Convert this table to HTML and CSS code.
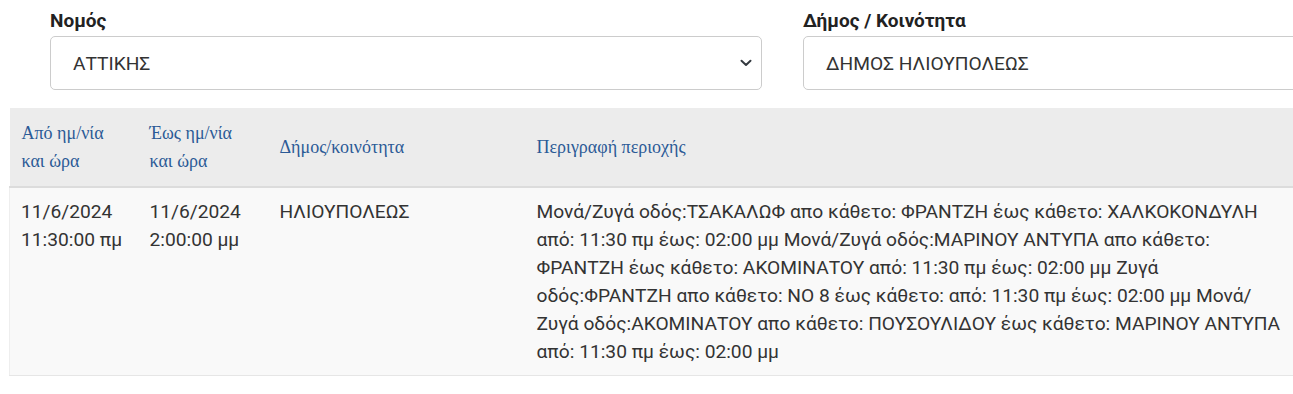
FILE: index.html
```html
<!DOCTYPE html>
<html lang="el">
<head>
<meta charset="utf-8">
<link rel="stylesheet" href="styles.css">
</head>
<body>
<div class="filters">
  <div class="field">
    <label class="label">Νομός</label>
    <div class="select">
      <span>ΑΤΤΙΚΗΣ</span>
      <svg class="chev" width="12" height="8" viewBox="0 0 12 8"><path d="M1.5 1.8 L6 6 L10.5 1.8" fill="none" stroke="#343a40" stroke-width="2" stroke-linecap="round" stroke-linejoin="round"/></svg>
    </div>
  </div>
  <div class="field">
    <label class="label">Δήμος / Κοινότητα</label>
    <div class="select">
      <span>ΔΗΜΟΣ ΗΛΙΟΥΠΟΛΕΩΣ</span>
    </div>
  </div>
</div>
<table class="grid">
  <thead>
    <tr>
      <th class="c1">Από ημ/νία<br>και ώρα</th>
      <th class="c2">Έως ημ/νία<br>και ώρα</th>
      <th class="c3">Δήμος/κοινότητα</th>
      <th class="c4">Περιγραφή περιοχής</th>
    </tr>
  </thead>
  <tbody>
    <tr>
      <td>11/6/2024<br>11:30:00 πμ</td>
      <td>11/6/2024<br>2:00:00 μμ</td>
      <td>ΗΛΙΟΥΠΟΛΕΩΣ</td>
      <td class="desc">Μονά/Ζυγά οδός:ΤΣΑΚΑΛΩΦ απο κάθετο: ΦΡΑΝΤΖΗ έως κάθετο: ΧΑΛΚΟΚΟΝΔΥΛΗ από: 11:30 πμ έως: 02:00 μμ Μονά/Ζυγά οδός:ΜΑΡΙΝΟΥ ΑΝΤΥΠΑ απο κάθετο: ΦΡΑΝΤΖΗ έως κάθετο: ΑΚΟΜΙΝΑΤΟΥ από: 11:30 πμ έως: 02:00 μμ Ζυγά οδός:ΦΡΑΝΤΖΗ απο κάθετο: ΝΟ 8 έως κάθετο: από: 11:30 πμ έως: 02:00 μμ Μονά/Ζυγά οδός:ΑΚΟΜΙΝΑΤΟΥ απο κάθετο: ΠΟΥΣΟΥΛΙΔΟΥ έως κάθετο: ΜΑΡΙΝΟΥ ΑΝΤΥΠΑ από: 11:30 πμ έως: 02:00 μμ</td>
    </tr>
  </tbody>
</table>
</body>
</html>
```
FILE: styles.css
```css
html, body {
  margin: 0;
  padding: 0;
  background: #fff;
  overflow: hidden;
}
body {
  font-family: Roboto, "Noto Sans", sans-serif;
  color: #333;
  font-size: 19.2px;
  width: 1600px;
}
.filters {
  display: grid;
  grid-template-columns: 712px 712px;
  column-gap: 41px;
  padding: 10px 0 0 50px;
}
.field {
  display: flex;
  flex-direction: column;
}
.label {
  font-weight: 700;
  font-size: 19px;
  color: #222;
  line-height: 22px;
  margin-bottom: 4px;
}
.select {
  height: 52px;
  border: 1px solid #ccc;
  border-radius: 5px;
  display: flex;
  align-items: center;
  justify-content: space-between;
  padding: 0 9px 0 22px;
  font-size: 19.2px;
  color: #333;
}
.chev {
  display: block;
}
.grid {
  margin: 18px 0 0 9px;
  width: 1295px;
  border-collapse: collapse;
  table-layout: fixed;
}
.grid th {
  background: #ececec;
  font-family: "Liberation Serif", "DejaVu Serif", serif;
  font-weight: 400;
  font-size: 18px;
  color: #2b5a96;
  text-align: left;
  line-height: 28px;
  padding: 11px 12px 11px 12px;
  border-bottom: 2px solid #dcdcdc;
  vertical-align: middle;
}
.c1 { width: 104px; }
.c2 { width: 106px; }
.c3 { width: 233px; }
.grid td {
  background: #f9f9f9;
  vertical-align: top;
  line-height: 28px;
  padding: 10px 12px 9px 12px;
  border-bottom: 1px solid #e6e6e6;
  font-size: 19.2px;
  color: #333;
}
.grid tbody tr td:first-child {
  border-left: 1px solid #eee;
  padding-left: 11px;
}
```
